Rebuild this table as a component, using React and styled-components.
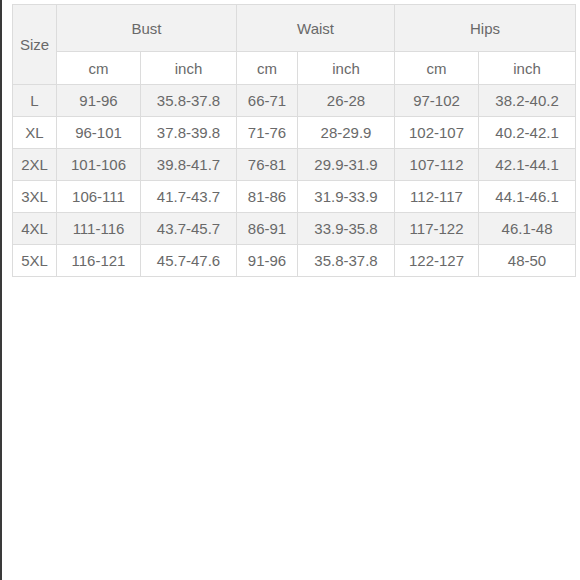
import React from "react";
import styled, { createGlobalStyle } from "styled-components";

const GlobalStyle = createGlobalStyle`
  html, body {
    margin: 0;
    padding: 0;
    background: #ffffff;
  }
  body {
    font-family: "Liberation Sans", Arial, sans-serif;
  }
`;

const Page = styled.div`
  width: 580px;
  height: 580px;
  box-sizing: border-box;
  border-left: 2px solid #3a3a3a;
  padding: 4px 0 0 10px;
  background: #ffffff;
`;

const Table = styled.table`
  width: 563px;
  table-layout: fixed;
  border-collapse: collapse;
  border: 1px solid #dcdcdc;
`;

const Cell = styled.td`
  height: ${(p) => p.$h || 31}px;
  padding: 0;
  border: 1px solid #dcdcdc;
  background: ${(p) => (p.$shade ? "#f2f2f2" : "#ffffff")};
  color: #696969;
  font-size: 15px;
  font-weight: 400;
  text-align: center;
  vertical-align: middle;
  white-space: nowrap;
`;

const widths = [44, 84, 96, 61, 97, 84, 97];

const groups = ["Bust", "Waist", "Hips"];

const rows = [
  ["L", "91-96", "35.8-37.8", "66-71", "26-28", "97-102", "38.2-40.2"],
  ["XL", "96-101", "37.8-39.8", "71-76", "28-29.9", "102-107", "40.2-42.1"],
  ["2XL", "101-106", "39.8-41.7", "76-81", "29.9-31.9", "107-112", "42.1-44.1"],
  ["3XL", "106-111", "41.7-43.7", "81-86", "31.9-33.9", "112-117", "44.1-46.1"],
  ["4XL", "111-116", "43.7-45.7", "86-91", "33.9-35.8", "117-122", "46.1-48"],
  ["5XL", "116-121", "45.7-47.6", "91-96", "35.8-37.8", "122-127", "48-50"],
];

export default function App() {
  return (
    <>
      <GlobalStyle />
      <Page>
        <Table>
          <colgroup>
            {widths.map((w, i) => (
              <col key={i} style={{ width: w }} />
            ))}
          </colgroup>
          <tbody>
            <tr>
              <Cell as="th" rowSpan={2} $shade $h={46}>
                Size
              </Cell>
              {groups.map((g) => (
                <Cell as="th" key={g} colSpan={2} $shade $h={46}>
                  {g}
                </Cell>
              ))}
            </tr>
            <tr>
              {groups.map((g) => (
                <React.Fragment key={g}>
                  <Cell $h={32}>cm</Cell>
                  <Cell $h={32}>inch</Cell>
                </React.Fragment>
              ))}
            </tr>
            {rows.map((r, i) => (
              <tr key={r[0]}>
                {r.map((v, j) => (
                  <Cell key={j} $shade={i % 2 === 0}>
                    {v}
                  </Cell>
                ))}
              </tr>
            ))}
          </tbody>
        </Table>
      </Page>
    </>
  );
}
